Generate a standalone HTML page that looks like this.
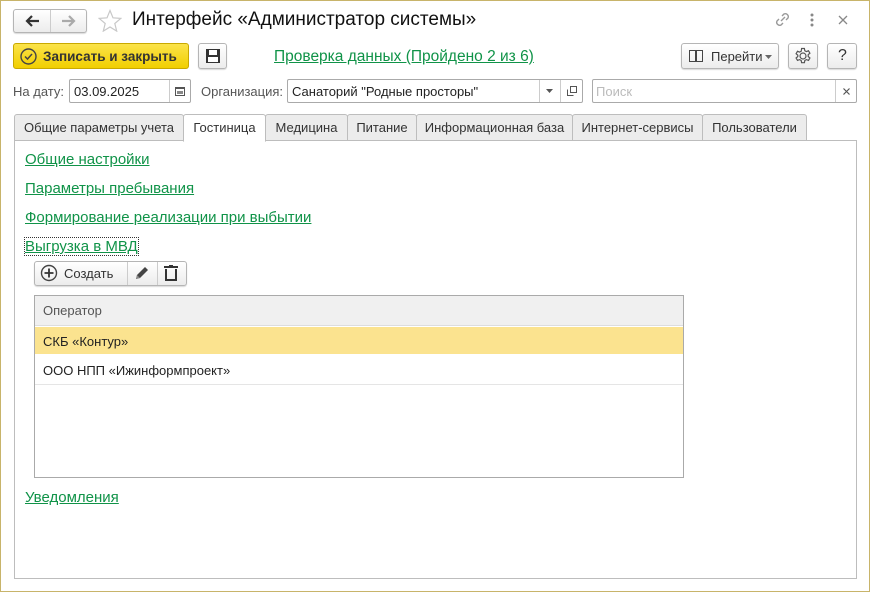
<!DOCTYPE html><html><head><meta charset="utf-8"><style>
*{box-sizing:border-box}body{margin:0;width:870px;height:592px;background:#fff;font-family:"Liberation Sans",sans-serif;font-size:13px;color:#333;position:relative;overflow:hidden}
.win{position:absolute;left:0;top:0;width:870px;height:592px;border:1px solid #c8b46a}
.a{position:absolute}
.btn{position:absolute;border:1px solid #b5b5b5;border-radius:3px;background:linear-gradient(#fff,#ececec);box-shadow:0 1px 1px rgba(0,0,0,.15)}
.inp{position:absolute;border:1px solid #aaa;border-radius:2px;background:#fff}
.lnk{position:absolute;color:#109348;text-decoration:underline;font-size:15px}
.tab{position:absolute;top:114px;height:27px;border:1px solid #bdbdbd;background:#ececec;border-radius:3px 3px 0 0;text-align:center;line-height:25px;font-size:13px;color:#333}
</style></head><body><div class="win"></div>
<div class="btn" style="left:13px;top:9px;width:74px;height:24px"></div>
<div class="a" style="left:50px;top:10px;width:1px;height:22px;background:#ccc"></div>
<svg class="a" style="left:24px;top:14px" width="16" height="14"><path d="M15 7H3M8 2L3 7l5 5" fill="none" stroke="#333" stroke-width="2.2"/></svg>
<svg class="a" style="left:61px;top:14px" width="16" height="14"><path d="M1 7h12M8 2l5 5-5 5" fill="none" stroke="#aaa" stroke-width="2.2"/></svg>
<svg class="a" style="left:98px;top:9px" width="24" height="23"><path d="M12 1.5l3 7.3 7.8.6-6 5.1 1.9 7.6L12 18l-6.7 4.1 1.9-7.6-6-5.1 7.8-.6z" fill="none" stroke="#c8c8c8" stroke-width="1.2"/></svg>
<div class="a" style="left:132px;top:9px;font-size:19px;color:#111">Интерфейс «Администратор системы»</div>
<svg class="a" style="left:774px;top:11px" width="17" height="17"><path d="M7 10l4-4M5 8L3 10a3 3 0 0 0 4 4l2-2M12 9l2-2a3 3 0 0 0-4-4L8 5" fill="none" stroke="#999" stroke-width="1.4"/></svg>
<svg class="a" style="left:809px;top:12px" width="6" height="16"><circle cx="3" cy="3" r="1.5" fill="#888"/><circle cx="3" cy="8" r="1.5" fill="#888"/><circle cx="3" cy="13" r="1.5" fill="#888"/></svg>
<svg class="a" style="left:838px;top:15px" width="10" height="10"><path d="M1 1l8 8M9 1L1 9" stroke="#888" stroke-width="1.3"/></svg>
<div class="a" style="left:13px;top:43px;width:176px;height:26px;border:1px solid #c9a900;border-radius:3px;background:linear-gradient(#fbe34a,#f1cf00)"></div>
<svg class="a" style="left:20px;top:48px" width="17" height="17"><circle cx="8.5" cy="8.5" r="7.5" fill="none" stroke="#444" stroke-width="1.4"/><path d="M5 8.5l2.5 2.5 4.5-5" fill="none" stroke="#444" stroke-width="1.5"/></svg>
<div class="a" style="left:43px;top:49px;font-size:13.5px;font-weight:bold;color:#333">Записать и закрыть</div>
<div class="btn" style="left:198px;top:43px;width:29px;height:26px"></div>
<svg class="a" style="left:205px;top:48px" width="16" height="16"><rect x="1" y="1" width="14" height="14" fill="#333"/><rect x="4" y="2" width="8" height="5" fill="#fff"/><rect x="3" y="9" width="10" height="5" fill="#fff"/></svg>
<div class="lnk" style="left:274px;top:48px;font-size:15.5px">Проверка данных (Пройдено 2 из 6)</div>
<div class="btn" style="left:681px;top:43px;width:98px;height:26px"></div>
<div class="a" style="left:689px;top:50px;width:14px;height:12px;border:1.5px solid #444"></div><div class="a" style="left:695px;top:50px;width:1.5px;height:12px;background:#444"></div>
<div class="a" style="left:711px;top:49px;color:#333">Перейти</div>
<svg class="a" style="left:765px;top:55px" width="8" height="5"><path d="M0 0h7L3.5 4z" fill="#666"/></svg>
<div class="btn" style="left:788px;top:43px;width:30px;height:26px"></div>
<svg class="a" style="left:794px;top:47px" width="18" height="18"><g fill="none" stroke="#555" stroke-width="1.2"><circle cx="9" cy="9" r="3"/><path d="M7.6 1.5h2.8l.4 2.2 1.6.9 2.1-.8 1.4 2.4-1.7 1.5v1.8l1.7 1.5-1.4 2.4-2.1-.8-1.6.9-.4 2.2H7.6l-.4-2.2-1.6-.9-2.1.8-1.4-2.4 1.7-1.5V8.2L2.1 6.7l1.4-2.4 2.1.8 1.6-.9z"/></g></svg>
<div class="btn" style="left:827px;top:43px;width:30px;height:26px"></div>
<div class="a" style="left:838px;top:47px;font-size:16px;color:#333">?</div>
<div class="a" style="left:13px;top:84px;color:#555">На дату:</div>
<div class="inp" style="left:69px;top:79px;width:122px;height:24px"></div>
<div class="a" style="left:169px;top:80px;width:1px;height:22px;background:#ccc"></div>
<div class="a" style="left:74px;top:84px;color:#222">03.09.2025</div>
<svg class="a" style="left:175px;top:86px" width="10" height="10"><rect x="0.5" y="1.5" width="9" height="8" fill="none" stroke="#555"/><rect x="0" y="1" width="10" height="2" fill="#555"/><rect x="2" y="5" width="6" height="3" fill="#888"/></svg>
<div class="a" style="left:201px;top:84px;color:#555">Организация:</div>
<div class="inp" style="left:287px;top:79px;width:296px;height:24px"></div>
<div class="a" style="left:539px;top:80px;width:1px;height:22px;background:#ccc"></div>
<div class="a" style="left:560px;top:80px;width:1px;height:22px;background:#ccc"></div>
<div class="a" style="left:292px;top:84px;color:#222">Санаторий "Родные просторы"</div>
<svg class="a" style="left:546px;top:89px" width="7" height="4"><path d="M0 0h7L3.5 4z" fill="#555"/></svg>
<svg class="a" style="left:567px;top:86px" width="10" height="10"><rect x="3.5" y="0.5" width="6" height="6" fill="none" stroke="#555"/><path d="M0.5 3.5v6h6" fill="none" stroke="#555"/></svg>
<div class="inp" style="left:592px;top:79px;width:265px;height:24px"></div>
<div class="a" style="left:835px;top:80px;width:1px;height:22px;background:#ccc"></div>
<div class="a" style="left:596px;top:84px;color:#bbb">Поиск</div>
<svg class="a" style="left:843px;top:88px" width="7" height="7"><path d="M0.5 0.5l6 6M6.5 0.5l-6 6" stroke="#555" stroke-width="1.2"/></svg>
<div class="a" style="left:14px;top:140px;width:843px;height:439px;border:1px solid #bdbdbd"></div>
<div class="tab" style="left:14px;width:170px">Общие параметры учета</div>
<div class="tab" style="left:183px;width:83px;background:#fff;border-bottom-color:#fff;height:28px">Гостиница</div>
<div class="tab" style="left:265px;width:83px">Медицина</div>
<div class="tab" style="left:347px;width:70px">Питание</div>
<div class="tab" style="left:416px;width:157px">Информационная база</div>
<div class="tab" style="left:572px;width:131px">Интернет-сервисы</div>
<div class="tab" style="left:702px;width:105px">Пользователи</div>
<div class="lnk" style="left:25px;top:151px">Общие настройки</div>
<div class="lnk" style="left:25px;top:180px">Параметры пребывания</div>
<div class="lnk" style="left:25px;top:209px">Формирование реализации при выбытии</div>
<div class="lnk" style="left:25px;top:238px;outline:1px dotted #333">Выгрузка в МВД</div>
<div class="btn" style="left:34px;top:261px;width:153px;height:25px"></div>
<div class="a" style="left:127px;top:262px;width:1px;height:23px;background:#ccc"></div>
<div class="a" style="left:157px;top:262px;width:1px;height:23px;background:#ccc"></div>
<svg class="a" style="left:40px;top:264px" width="18" height="18"><circle cx="9" cy="9" r="7.5" fill="none" stroke="#444" stroke-width="1.4"/><path d="M9 4.5v9M4.5 9h9" stroke="#333" stroke-width="1.8"/></svg>
<div class="a" style="left:64px;top:266px;color:#333">Создать</div>
<svg class="a" style="left:134px;top:265px" width="16" height="16"><path d="M2 14l1-4 8-8 3 3-8 8z" fill="#444"/><path d="M2 14l1-4 3 3z" fill="#888"/></svg>
<svg class="a" style="left:164px;top:265px" width="14" height="16"><rect x="0" y="1" width="14" height="2" fill="#333"/><rect x="5" y="0" width="4" height="2" fill="#333"/><path d="M2 4v11h10V4" fill="none" stroke="#333" stroke-width="2"/></svg>
<div class="a" style="left:34px;top:295px;width:650px;height:183px;border:1px solid #aaa"></div>
<div class="a" style="left:35px;top:296px;width:648px;height:30px;background:#f0f0f0;border-bottom:1px solid #ddd"></div>
<div class="a" style="left:43px;top:303px;color:#555">Оператор</div>
<div class="a" style="left:35px;top:327px;width:648px;height:27px;background:#fbe38f"></div>
<div class="a" style="left:43px;top:334px;color:#222">СКБ «Контур»</div>
<div class="a" style="left:35px;top:384px;width:648px;height:1px;background:#e5e5e5"></div>
<div class="a" style="left:43px;top:363px;color:#222">ООО НПП «Ижинформпроект»</div>
<div class="lnk" style="left:25px;top:489px">Уведомления</div>
</body></html>
